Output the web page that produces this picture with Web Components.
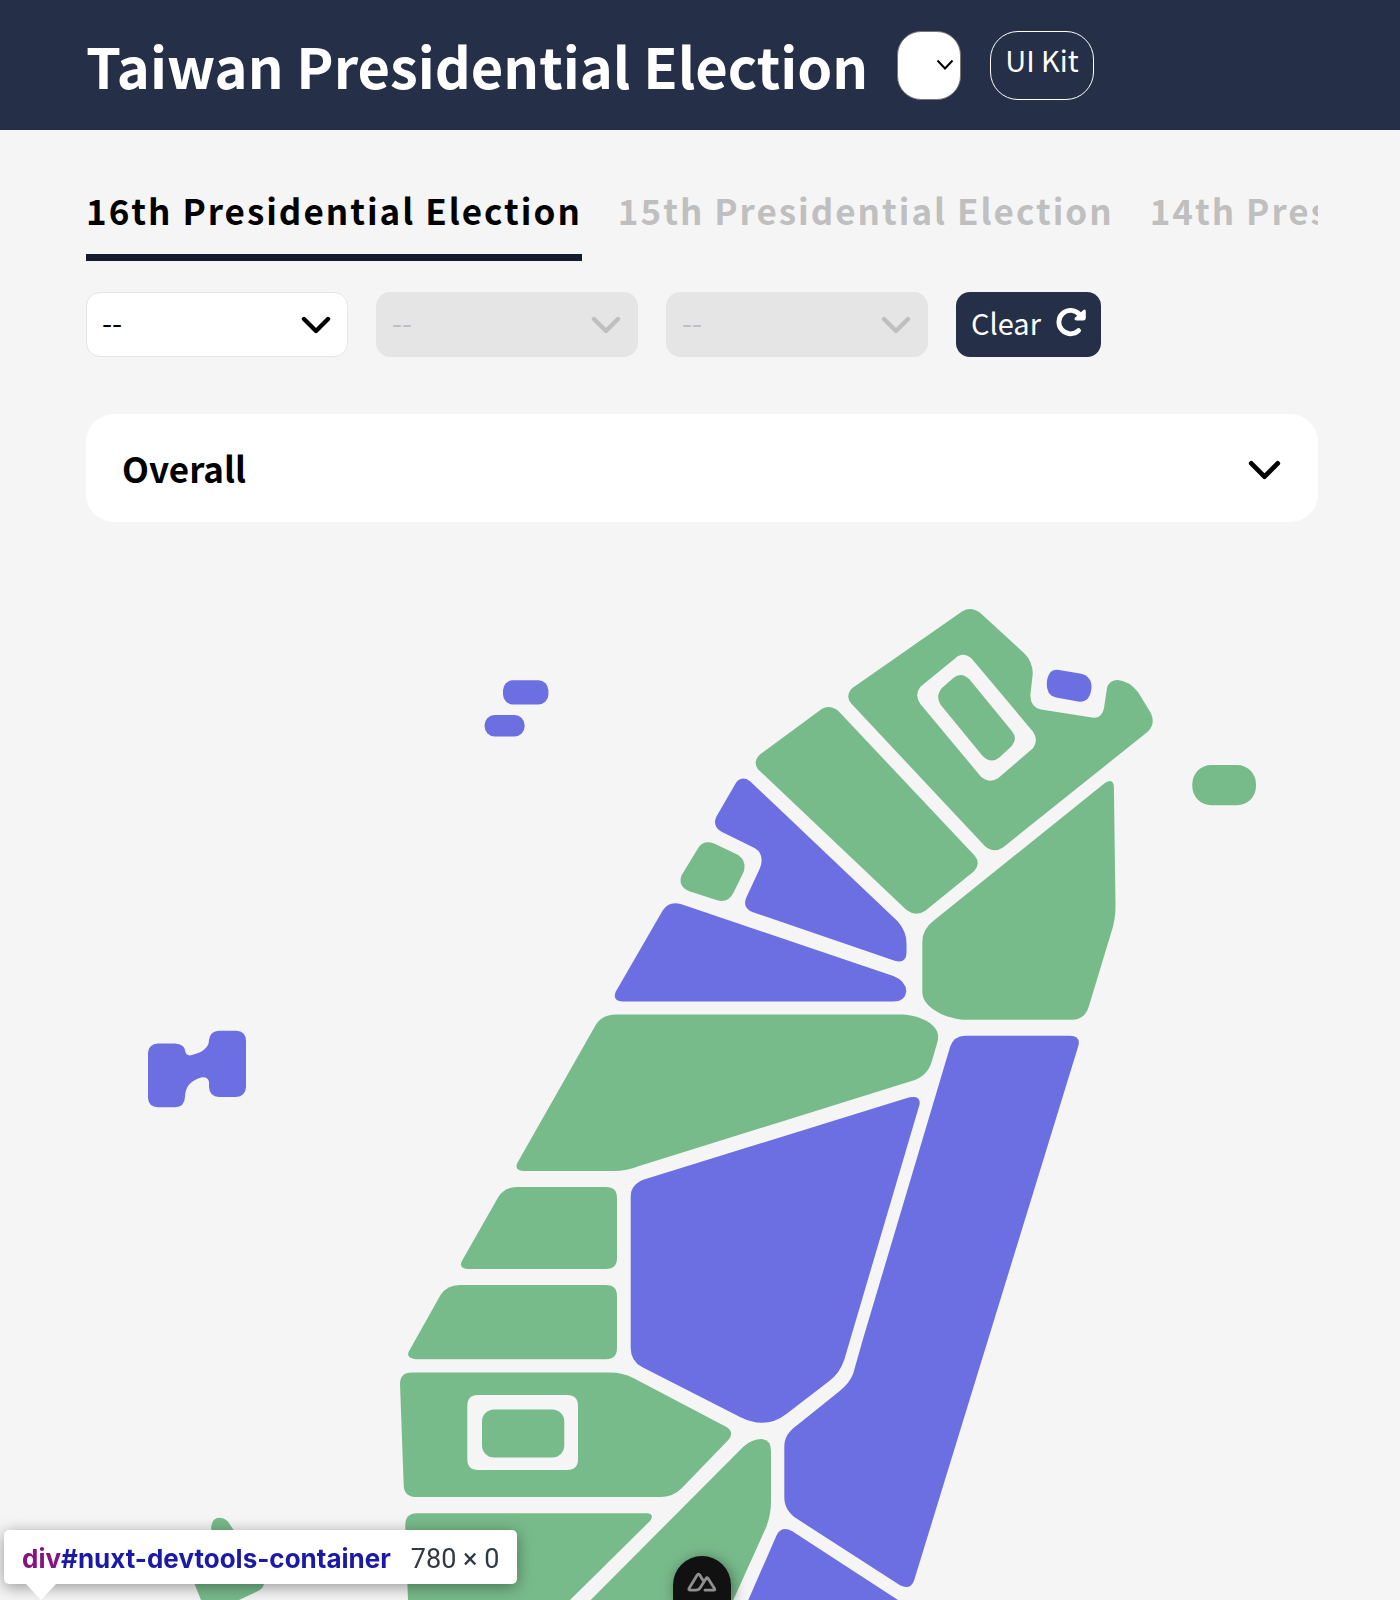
<!DOCTYPE html>
<html lang="en">
<head>
<meta charset="utf-8">
<meta name="viewport" content="width=device-width, initial-scale=1">
<title>Taiwan Presidential Election</title>
<style>
  body {
    margin: 0;
    background: #f5f5f5;
    color: #000;
    font-family: "Noto Sans CJK TC", "Noto Sans", sans-serif;
    --navy: #252f48;
    --green: #78bb8b;
    --purple: #6c6fe2;
    --muted: #bfbfbf;
  }
</style>
</head>
<body>
<election-app></election-app>

<script>
function define(name, html) {
  const template = document.createElement('template');
  template.innerHTML = '<style>*{box-sizing:border-box}button,select{font:inherit;color:inherit;margin:0}</style>' + html;
  customElements.define(name, class extends HTMLElement {
    constructor() {
      super();
      this.attachShadow({ mode: 'open' }).append(template.content.cloneNode(true));
    }
    connectedCallback() {
      const select = this.shadowRoot.querySelector('select');
      if (select) {
        select.disabled = this.hasAttribute('disabled');
        select.setAttribute('aria-label', this.getAttribute('name') || '');
      }
      const tab = this.shadowRoot.querySelector('[role=tab]');
      if (tab) tab.setAttribute('aria-selected', String(this.hasAttribute('active')));
    }
  });
}

define('icon-chevron', `
  <style>
    :host { display: block; width: 30px; height: 18px; pointer-events: none; }
    svg { display: block; width: 100%; height: 100%; }
  </style>
  <svg viewBox="0 0 30 18" aria-hidden="true">
    <path d="M3 3 L15 15 L27 3" fill="none" stroke="currentColor" stroke-width="4.4" stroke-linecap="round" stroke-linejoin="round"/>
  </svg>`);

define('language-select', `
  <style>
    :host { display: grid; width: 64px; height: 69px; align-items: center; }
    select, svg { grid-area: 1 / 1; }
    select { appearance: none; width: 100%; height: 100%; border: 1px solid #767676; border-radius: 24px; background: #fff; padding: 0 16px; }
    svg { justify-self: end; width: 18px; height: 12px; margin-right: 7px; color: #000; pointer-events: none; }
  </style>
  <select><option value=""></option></select>
  <svg viewBox="0 0 18 12" aria-hidden="true"><path d="M1.5 1.5 L9 9.5 L16.5 1.5" fill="none" stroke="currentColor" stroke-width="2"/></svg>`);

define('app-header', `
  <style>
    :host { display: flex; align-items: center; gap: 29px; height: 130px; padding: 0 82px 0 86px; background: var(--navy); color: #fff; }
    h1 { margin: 0; font-size: 56px; line-height: 80px; font-weight: 700; white-space: nowrap; }
    a { display: block; height: 69px; padding: 0 14px; border: 1px solid #fff; border-radius: 28px; font-size: 29px; line-height: 54px; color: inherit; text-decoration: none; white-space: nowrap; }
  </style>
  <h1>Taiwan Presidential Election</h1>
  <language-select name="Language"></language-select>
  <a href="#ui-kit">UI Kit</a>`);

define('election-tab', `
  <style>
    :host { display: block; flex: none; }
    button { display: block; padding: 0 0 17px; border: 0; border-bottom: 7px solid transparent; background: none; color: var(--muted); font-size: 35px; line-height: 54px; font-weight: 700; letter-spacing: 2px; white-space: nowrap; }
    :host([active]) button { color: #000; border-color: #151b2e; }
  </style>
  <button role="tab"><slot></slot></button>`);

define('election-tabs', `
  <style>
    :host { display: flex; gap: 36px; overflow: hidden; }
  </style>
  <slot></slot>`);

define('region-select', `
  <style>
    :host { display: grid; width: 262px; height: 65px; align-items: center; }
    select, icon-chevron { grid-area: 1 / 1; }
    select { appearance: none; width: 100%; height: 100%; padding: 0 15px 8px; border: 1px solid #e5e5e5; border-radius: 14px; background: #fff; font-size: 29px; opacity: 1; }
    icon-chevron { justify-self: end; margin-right: 17px; }
    :host([disabled]) { color: var(--muted); }
    :host([disabled]) select { background: #e5e5e5; }
  </style>
  <select><option>--</option></select>
  <icon-chevron></icon-chevron>`);

define('clear-button', `
  <style>
    :host { display: block; }
    button { display: flex; align-items: center; gap: 15px; height: 65px; padding: 0 15px 6px; border: 0; border-radius: 14px; background: var(--navy); color: #fff; font-size: 29px; line-height: 42px; }
    svg { display: block; width: 30px; height: 30px; }
  </style>
  <button>
    <slot></slot>
    <svg viewBox="0 0 30 30" aria-hidden="true">
      <path d="M22.6 23.6 A11.7 11.7 0 1 1 23.4 7.4" fill="none" stroke="currentColor" stroke-width="4.8" stroke-linecap="round"/>
      <path d="M27.4 3 Q29.8 1.8 29.8 4.4 V11 Q29.8 13.4 27.6 13.4 H20.4 Q17.4 13 19.2 10.6 Z" fill="currentColor"/>
    </svg>
  </button>`);

define('region-filters', `
  <style>
    :host { display: flex; flex-wrap: wrap; gap: 28px; }
  </style>
  <region-select name="City"></region-select>
  <region-select name="District" disabled></region-select>
  <region-select name="Village" disabled></region-select>
  <clear-button>Clear</clear-button>`);

define('overall-card', `
  <style>
    :host { display: block; }
    button { display: flex; align-items: center; justify-content: space-between; width: 100%; height: 108px; padding: 0 37px 0 36px; border: 0; border-radius: 28px; background: #fff; font-size: 35px; line-height: 54px; font-weight: 700; }
    icon-chevron { width: 33px; height: 20px; margin-top: 4px; }
  </style>
  <button aria-expanded="false"><slot></slot><icon-chevron></icon-chevron></button>`);

define('election-map', `
  <style>
    :host { display: block; }
    svg { display: block; width: 100%; height: auto; }
    .g { fill: var(--green); }
    .p { fill: var(--purple); }
  </style>
  <svg viewBox="86 522 1232 1078" role="img" aria-label="Map of results by county">
    <!-- New Taipei, with Taipei City inside -->
    <path class="g" fill-rule="evenodd" d="M962 611.5 Q971 606 980.4 613 L1024 653 Q1033 662 1032.7 674 L1030.4 695 Q1030 707 1041 709.5 L1092 717.6 Q1102 719 1104 708 L1107 688 Q1109 680 1118 680 Q1129 681 1138 692 L1150.5 712.5 Q1156 723 1148 731.5 L1003 847.5 Q994 853.5 985 846.3 L851 703.3 Q845 696 852 688.3 Z
      M955 658.5 L920.4 686.7 Q914 695 920.4 704 L981.2 777 Q989.8 783.7 998 778.3 L1033 748.3 Q1038.8 740 1033 731.7 L971.8 658.7 Q962.9 651 955 658.5 Z"/>
    <path class="g" d="M941.6 688.3 Q935 696 940.8 705 L982.4 755.7 Q991.4 764.5 999.6 757.3 L1011 746.7 Q1018.4 738.7 1011.8 731 L969.4 679.3 Q961 671 953 678.3 Z"/>
    <!-- Keelung -->
    <path class="p" d="M1059 670 L1080 673.5 Q1092 676 1091.5 688 Q1090 703 1078 701.5 L1056 697.5 Q1046 695 1046.8 683 Q1048 668.5 1059 670 Z"/>
    <!-- Guishan Island -->
    <rect class="g" x="1192.3" y="765" width="63.7" height="40.3" rx="19"/>
    <!-- Taoyuan -->
    <path class="g" d="M822 708.7 Q830 704.5 838.4 711 L975 856 Q980.8 863.5 974.3 871 L925.3 910.7 Q916 917 906.5 910 L758 769.3 Q752.5 762.3 759.6 754.7 Z"/>
    <!-- Hsinchu County and City -->
    <path class="p" d="M736.3 782.3 Q742 775.5 749.8 781 L897.6 921.3 Q906.5 931 906.5 944 L906.5 953 Q906 964 894.7 960.7 L753 912.3 Q742.4 908.3 746 898.3 L760 868 Q765 854.7 755 848.3 L722 832 Q712 826.7 716.3 816.7 Z"/>
    <path class="g" d="M698.8 847 Q704 839.7 714.7 843.7 L736.7 854.3 Q747 860 743.7 871.7 L733.5 892.7 Q728 903.7 716.3 900 L689.4 891.3 Q677.5 886.3 681.6 875.3 Z"/>
    <!-- Miaoli -->
    <path class="p" d="M662.7 910.4 Q669 900.7 680.7 904 L893.3 976 Q906 981 906.3 991.4 Q905 1001.4 893.3 1001.4 L622.7 1001.4 Q612 1001 615.7 991.8 Z"/>
    <!-- Yilan -->
    <path class="g" d="M1104.9 783 Q1113.5 777.3 1113.9 787.3 L1115.5 906.7 Q1115.5 920 1111 933.3 L1088.6 1007.3 Q1084.5 1019.7 1072.2 1019.7 L964 1019.7 C951.8 1019.7 922.3 1010 922.3 991.7 L922.3 941.7 Q922.3 929.3 933.5 920.7 Z"/>
    <!-- Taichung -->
    <path class="g" d="M595.7 1025 Q602 1014.5 616 1014.5 L901.7 1014.5 C916.7 1014.5 936.7 1022.9 938 1034.6 Q938.5 1039 937.3 1042.5 L932 1060.7 Q927.7 1076.4 911.7 1081 L640 1165.7 Q626.7 1171 613.3 1171 L523.3 1171 Q514 1170 517.3 1162.9 Z"/>
    <!-- Changhua -->
    <path class="g" d="M498.6 1196.4 Q505 1187 516.6 1187 L606 1187 Q617 1187 617 1198 L617 1258 Q617 1269 606 1269 L467.3 1269 Q458.5 1268 461.9 1261 Z"/>
    <!-- Yunlin -->
    <path class="g" d="M440.5 1295 Q447 1285 459.6 1285 L606 1285 Q617 1285 617 1296 L617 1348 Q617 1359.2 606 1359.2 L415.6 1359.2 Q406 1358 408.7 1351.8 Z"/>
    <!-- Nantou -->
    <path class="p" d="M906.2 1098.2 Q921 1094.3 919.6 1104.3 L844.5 1359 Q840 1373 829.3 1381 L786.7 1413.7 Q766 1430 740 1417 L642 1367 Q630.7 1361 630.7 1348 L630.7 1196.4 Q630.7 1184.6 644 1179.6 Z"/>
    <!-- Hualien -->
    <path class="p" d="M950.2 1046.4 Q954 1036 965 1035.7 L1070 1035.7 Q1081 1036 1078.3 1046 L914 1580.7 Q910 1590.5 900 1585.3 L797.7 1519.3 C788 1513 784.3 1506 784.3 1497 L784.3 1447 C784.3 1437 789 1431 797.7 1424.7 L840 1390.7 C848 1384 852.5 1378 854.7 1368.3 L862.7 1340 Z"/>
    <!-- Chiayi County, with Chiayi City inside -->
    <path class="g" fill-rule="evenodd" d="M400 1384 Q400 1372.5 411.7 1372.5 L610 1372.5 Q622.7 1372.5 633.3 1378 L726 1426.7 Q735 1432 728.3 1440 L681.7 1488.3 Q673.3 1497 660 1497 L415 1497 Q404 1496.5 403.7 1485 Z
      M478 1395 Q467.3 1395 467.3 1406 V1459 Q467.3 1470 478 1470 H567 Q578 1470 578 1459 V1406 Q578 1395 567 1395 Z"/>
    <rect class="g" x="482" y="1409.5" width="82.3" height="48" rx="12"/>
    <!-- Tainan -->
    <path class="g" d="M405.3 1525 Q405.5 1513.3 416.7 1513.3 L646.7 1513.3 Q655 1514 650 1521 L570 1600 L408 1600 Z"/>
    <!-- Kaohsiung -->
    <path class="g" d="M590.7 1600 L743.3 1446.7 Q751.7 1438.9 761.7 1438.9 Q771 1440 771 1450.7 L771 1501.7 Q771 1515 765.7 1528.3 L733.3 1600 Z"/>
    <!-- Taitung -->
    <path class="p" d="M748.3 1600 L776.7 1535 Q782 1525.5 792.3 1531.3 L898 1600 Z"/>
    <!-- Liuqiu -->
    <path class="g" d="M211.2 1540 V1528 Q211.4 1518 219.6 1517.8 Q225.5 1518 229 1523 L263 1575 Q267 1586 259 1590.5 L239 1600 H201 L194.6 1584 Q192 1577 200 1565 Z"/>
    <!-- Lienchiang -->
    <rect class="p" x="503" y="680.3" width="45.4" height="24.2" rx="10"/>
    <rect class="p" x="484.6" y="715" width="40" height="21.4" rx="10"/>
    <!-- Penghu -->
    <path class="p" d="M158 1043.5 H175 Q184.5 1044 185.2 1051 Q186 1056 191 1055.3 Q209 1051 209 1040 Q210 1031 219 1030.7 H236 Q246 1031 246 1041 V1087 Q245.5 1096.5 236 1097 H219 Q209.5 1096.5 209 1087 V1082 Q208 1076.5 202 1077.3 Q185 1082 185 1097 Q184.5 1107 175 1107.2 H158 Q148.5 1107 148 1098 V1053 Q148.5 1044 158 1043.5 Z"/>
  </svg>`);

define('inspect-tooltip', `
  <style>
    :host { position: fixed; left: 4px; bottom: 16px; display: flex; gap: 20px; height: 54px; padding: 2px 18px 0; border-radius: 5px; background: #fff; box-shadow: 0 3px 16px rgba(0,0,0,.4); box-sizing: border-box; font-family: Inter, sans-serif; font-size: 26px; line-height: 54px; color: #303942; white-space: nowrap; }
    :host::after { content: ""; position: absolute; left: 22px; top: 100%; border: solid transparent; border-width: 16px 15px 0; border-top-color: #fff; }
    b { font-weight: 700; color: #1a1aa6; }
    .tag { color: #881280; }
    .size { font-family: Roboto, sans-serif; font-size: 27px; }
  </style>
  <b><span class="tag">div</span>#nuxt-devtools-container</b><span class="size">780 × 0</span>`);

define('nuxt-button', `
  <style>
    :host { position: fixed; left: calc(50% + 2px); bottom: 0; transform: translateX(-50%); display: block; }
    button { display: block; width: 58px; height: 44px; padding: 0 14px; border: 0; border-radius: 29px 29px 0 0; background: #111; color: #8f8f8f; box-shadow: 2px 2px 14px rgba(0,0,0,.4); }
    svg { display: block; width: 30px; height: 20px; margin-top: 7px; }
  </style>
  <button aria-label="Toggle Nuxt DevTools">
    <svg viewBox="0 0 30 20" aria-hidden="true" fill="none" stroke="currentColor" stroke-width="2.8" stroke-linejoin="round" stroke-linecap="round">
      <path d="M15.8 8 L12.6 2.8 Q11.5 1.3 10.4 2.8 L2 16.5 Q1.3 18 2.9 18.2 H9 Q11.8 18.2 13.4 15.6 L19.2 6.2 Q20 5.2 20.9 6.2 L27.5 16.5 Q28.3 18 26.8 18.2 H18"/>
    </svg>
  </button>`);

define('election-app', `
  <style>
    :host { display: block; }
    main { display: flex; flex-direction: column; padding: 53px 82px 0 86px; }
    region-filters { margin: 31px 0 57px; }
  </style>
  <app-header></app-header>
  <main>
    <election-tabs role="tablist">
      <election-tab active>16th Presidential Election</election-tab>
      <election-tab>15th Presidential Election</election-tab>
      <election-tab>14th Presidential Election</election-tab>
    </election-tabs>
    <region-filters></region-filters>
    <overall-card>Overall</overall-card>
    <election-map></election-map>
  </main>
  <inspect-tooltip></inspect-tooltip>
  <nuxt-button></nuxt-button>`);
</script>
</body>
</html>
